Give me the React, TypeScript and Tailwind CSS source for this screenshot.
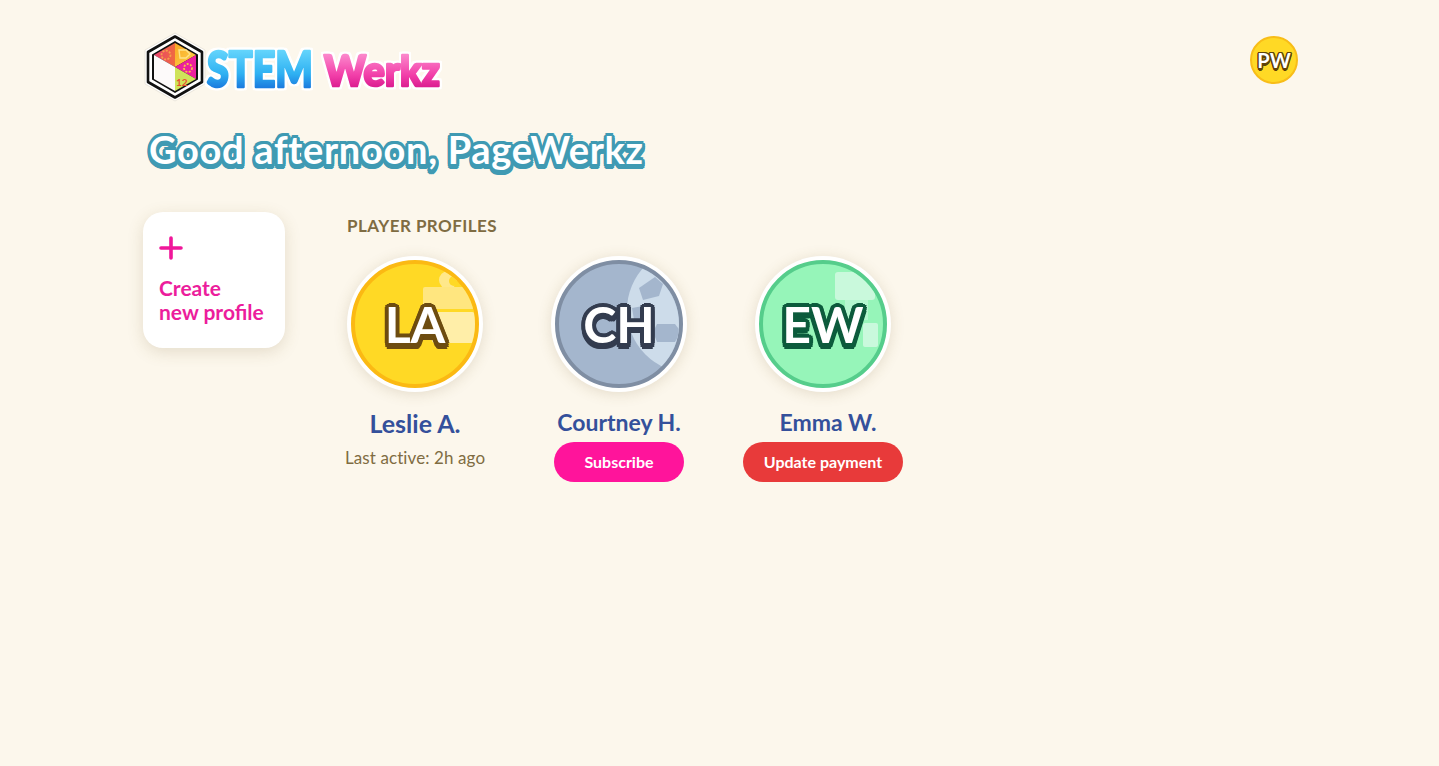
const HexLogo = () => (
  <svg width="64" height="70" viewBox="0 0 64 70" className="shrink-0">
    <defs>
      <linearGradient id="hexRed" x1="0" y1="0" x2="1" y2="0">
        <stop offset="0" stopColor="#e8406f" />
        <stop offset="1" stopColor="#f06a3f" />
      </linearGradient>
      <linearGradient id="hexGold" x1="0" y1="0" x2="1" y2="1">
        <stop offset="0" stopColor="#f9a825" />
        <stop offset="1" stopColor="#fdd34a" />
      </linearGradient>
    </defs>
    <polygon points="32,1 62,18 62,52 32,69 2,52 2,18" fill="#fff" stroke="#ece7dc" strokeWidth="1" strokeLinejoin="round" />
    <polygon points="32,4.5 59,20 59,50 32,65.5 5,50 5,20" fill="#fff" stroke="#111" strokeWidth="2.6" strokeLinejoin="round" />
    <polygon points="32,9 55,22.5 55,47.5 32,61 9,47.5 9,22.5" fill="#111" />
    <polygon points="32,11 53,23 32,35" fill="url(#hexGold)" />
    <polygon points="32,11 11,23 32,35" fill="url(#hexRed)" />
    <polygon points="53,23 53,47 32,35" fill="#ec1f9f" />
    <polygon points="32,35 53,47 32,59" fill="#cfe35a" />
    <polygon points="11,23 32,35 32,59 11,47" fill="#fdfafa" />
    <circle cx="23" cy="23" r="4.5" fill="none" stroke="#f5a04a" strokeWidth="1.8" strokeDasharray="2 1.4" />
    <circle cx="45" cy="36" r="4" fill="none" stroke="#f8bf45" strokeWidth="1.8" strokeDasharray="2 1.4" />
    <path d="M36 18h7l4 4-4 4h-6z" fill="none" stroke="#fee38a" strokeWidth="1.4" />
    <text x="33" y="54" fontSize="10" fontWeight="700" fill="#e8502f" fontFamily="Lato, sans-serif">12</text>
  </svg>
);

const Logo = () => (
  <div className="flex items-center">
    <HexLogo />
    <svg
      width="244"
      height="64"
      viewBox="0 0 244 64"
      className="-ml-[3px] overflow-visible [filter:drop-shadow(2px_0_0_#fff)_drop-shadow(-2px_0_0_#fff)_drop-shadow(0_2px_0_#fff)_drop-shadow(0_-2px_0_#fff)]"
    >
      <defs>
        <linearGradient id="stem" x1="0" y1="0" x2="0" y2="1">
          <stop offset="0.2" stopColor="#63d4fc" />
          <stop offset="0.6" stopColor="#2fb1f2" />
          <stop offset="0.95" stopColor="#1263d6" />
        </linearGradient>
        <linearGradient id="werkz" x1="0" y1="0" x2="0" y2="1">
          <stop offset="0.2" stopColor="#fb86cb" />
          <stop offset="0.6" stopColor="#f23fa9" />
          <stop offset="0.95" stopColor="#d10f86" />
        </linearGradient>
      </defs>
      <g fontFamily="Lato, sans-serif" fontWeight="900" strokeLinejoin="round">
        <text x="3" y="52" fontSize="49" textLength="106" lengthAdjust="spacingAndGlyphs" fill="url(#stem)" stroke="url(#stem)" strokeWidth="2.6">
          STEM
        </text>
        <text x="120" y="51" fontSize="42" textLength="116" lengthAdjust="spacingAndGlyphs" fill="url(#werkz)" stroke="url(#werkz)" strokeWidth="2.6">
          Werkz
        </text>
      </g>
    </svg>
  </div>
);

const Initials = ({ text, className }: { text: string; className: string }) => (
  <span className={`relative font-bold text-white ${className}`}>{text}</span>
);

const Player = ({
  initials,
  name,
  ring,
  fill,
  initialsClass,
  art,
  children,
  nameClass,
}: {
  initials: string;
  name: string;
  ring: string;
  fill: string;
  initialsClass: string;
  art: React.ReactNode;
  children: React.ReactNode;
  nameClass: string;
}) => (
  <div className="flex flex-col items-center">
    <div className="rounded-full bg-white p-[4px] shadow-[0_2px_14px_rgba(120,100,50,0.18)]">
      <div
        className={`relative flex h-[128px] w-[128px] items-center justify-center overflow-hidden rounded-full border-[4px] ${ring} ${fill}`}
      >
        <div className="absolute inset-0">{art}</div>
        <Initials text={initials} className={initialsClass} />
      </div>
    </div>
    <div className={`whitespace-nowrap font-bold leading-[28px] text-[#34509b] ${nameClass}`}>{name}</div>
    {children}
  </div>
);

export default function App() {
  return (
    <div className="min-h-screen w-full bg-[#fcf7ec] pt-[32px] pl-[143px] pr-[141px] font-['Lato',sans-serif]">
      <header className="flex items-start justify-between">
        <Logo />
        <div className="mt-[4px] flex h-[48px] w-[48px] items-center justify-center rounded-full border-2 border-[#f8bd18] bg-[#ffd925]">
          <span className="text-[20px] font-bold text-white [text-shadow:1.5px_0_0_#5e4208,-1.5px_0_0_#5e4208,0_1.5px_0_#5e4208,0_-1.5px_0_#5e4208,1px_1px_0_#5e4208,-1px_1px_0_#5e4208,1px_-1px_0_#5e4208,-1px_-1px_0_#5e4208,0_2.5px_0_#5e4208,1px_2px_0_#5e4208,-1px_2px_0_#5e4208]">
            PW
          </span>
        </div>
      </header>

      <h1 className="mt-[24px] pl-[6px] text-[38px] font-bold leading-[46px] tracking-[0.7px] text-white [text-shadow:3px_0_0_#3f9ab3,2.6px_1.5px_0_#3f9ab3,1.5px_2.6px_0_#3f9ab3,0_3px_0_#3f9ab3,-1.5px_2.6px_0_#3f9ab3,-2.6px_1.5px_0_#3f9ab3,-3px_0_0_#3f9ab3,-2.6px_-1.5px_0_#3f9ab3,-1.5px_-2.6px_0_#3f9ab3,0_-3px_0_#3f9ab3,1.5px_-2.6px_0_#3f9ab3,2.6px_-1.5px_0_#3f9ab3,3px_2px_0_#3f9ab3,-3px_2px_0_#3f9ab3,2.6px_3.5px_0_#3f9ab3,-2.6px_3.5px_0_#3f9ab3,1.5px_4.6px_0_#3f9ab3,-1.5px_4.6px_0_#3f9ab3,0_5px_0_#3f9ab3]">
        Good afternoon, PageWerkz
      </h1>

      <main className="mt-[40px] flex items-start">
        <button className="flex h-[136px] w-[142px] flex-col items-start rounded-[20px] bg-white pl-[16px] pt-[24px] shadow-[0_4px_16px_rgba(120,100,50,0.18)]">
          <svg width="24" height="24" viewBox="0 0 24 24" fill="none" stroke="#f0179a" strokeWidth="3.6" strokeLinecap="round">
            <path d="M12 2v20M2 12h20" />
          </svg>
          <span className="mt-[16px] text-left text-[21px] font-bold leading-[24px] text-[#ec1d9c]">
            Create
            <br />
            new profile
          </span>
        </button>

        <section className="ml-[62px]">
          <h2 className="text-[17px] font-bold uppercase leading-[28px] tracking-[0.45px] text-[#7f6c42]">Player profiles</h2>
          <div className="mt-[16px] flex items-start">
            <div className="w-[136px]">
              <Player
                initials="LA"
                name="Leslie A."
                ring="border-[#fbb913]"
                fill="bg-[#ffd925]"
                initialsClass="text-[50px] [text-shadow:4px_0_0_#6d4c10,3.5px_2px_0_#6d4c10,2px_3.5px_0_#6d4c10,0_4px_0_#6d4c10,-2px_3.5px_0_#6d4c10,-3.5px_2px_0_#6d4c10,-4px_0_0_#6d4c10,-3.5px_-2px_0_#6d4c10,-2px_-3.5px_0_#6d4c10,0_-4px_0_#6d4c10,2px_-3.5px_0_#6d4c10,3.5px_-2px_0_#6d4c10,3.5px_4px_0_#6d4c10,-3.5px_4px_0_#6d4c10,2px_5.5px_0_#6d4c10,-2px_5.5px_0_#6d4c10,0_6px_0_#6d4c10]"
                nameClass="mt-[17px] text-[25px]"
                art={
                  <svg viewBox="0 0 120 120" className="h-full w-full">
                    <circle cx="93" cy="16" r="9" fill="#ffe88a" />
                    <circle cx="99" cy="17" r="5" fill="#ffd925" />
                    <rect x="68" y="23" width="52" height="22" rx="2" fill="#ffe67f" />
                    <rect x="77" y="48" width="43" height="31" rx="3" fill="#ffeea8" />
                    <rect x="70" y="45" width="50" height="3" fill="#ffd925" />
                  </svg>
                }
              >
                <div className="mt-[7px] whitespace-nowrap text-[17px] leading-[28px] tracking-[0.1px] text-[#7f6c42]">Last active: 2h ago</div>
              </Player>
            </div>

            <div className="ml-[68px] w-[136px]">
              <Player
                initials="CH"
                name="Courtney H."
                ring="border-[#7f8ea3]"
                fill="bg-[#a4b6cd]"
                initialsClass="text-[50px] [text-shadow:4px_0_0_#333c4f,3.5px_2px_0_#333c4f,2px_3.5px_0_#333c4f,0_4px_0_#333c4f,-2px_3.5px_0_#333c4f,-3.5px_2px_0_#333c4f,-4px_0_0_#333c4f,-3.5px_-2px_0_#333c4f,-2px_-3.5px_0_#333c4f,0_-4px_0_#333c4f,2px_-3.5px_0_#333c4f,3.5px_-2px_0_#333c4f,3.5px_4px_0_#333c4f,-3.5px_4px_0_#333c4f,2px_5.5px_0_#333c4f,-2px_5.5px_0_#333c4f,0_6px_0_#333c4f]"
                nameClass="mt-[16px] text-[23px]"
                art={
                  <svg viewBox="0 0 120 120" className="h-full w-full">
                    <circle cx="131" cy="46" r="63" fill="#cddcea" />
                    <polygon points="80,24 96,13 104,20 100,32 84,36" fill="#a4b6cd" />
                    <polygon points="73,44 84,42 90,60 76,62" fill="#a4b6cd" />
                    <polygon points="98,60 116,60 122,68 116,78 98,78 94,68" fill="#a4b6cd" />
                  </svg>
                }
              >
                <button className="mt-[6px] h-[40px] w-[130px] shrink-0 rounded-full bg-[#ff149b] text-[16px] font-bold text-white">Subscribe</button>
              </Player>
            </div>

            <div className="ml-[68px] w-[136px]">
              <Player
                initials="EW"
                name="Emma W."
                ring="border-[#55cd8b]"
                fill="bg-[#96f5b9]"
                initialsClass="text-[50px] [text-shadow:4px_0_0_#0c5b3c,3.5px_2px_0_#0c5b3c,2px_3.5px_0_#0c5b3c,0_4px_0_#0c5b3c,-2px_3.5px_0_#0c5b3c,-3.5px_2px_0_#0c5b3c,-4px_0_0_#0c5b3c,-3.5px_-2px_0_#0c5b3c,-2px_-3.5px_0_#0c5b3c,0_-4px_0_#0c5b3c,2px_-3.5px_0_#0c5b3c,3.5px_-2px_0_#0c5b3c,3.5px_4px_0_#0c5b3c,-3.5px_4px_0_#0c5b3c,2px_5.5px_0_#0c5b3c,-2px_5.5px_0_#0c5b3c,0_6px_0_#0c5b3c]"
                nameClass="mt-[16px] translate-x-[5px] text-[23px]"
                art={
                  <svg viewBox="0 0 120 120" className="h-full w-full">
                    <rect x="72" y="8" width="40" height="28" rx="3" fill="#c9f9dc" />
                    <rect x="82" y="36" width="23" height="20" fill="#b4f7cf" />
                    <rect x="100" y="59" width="15" height="24" rx="2" fill="#c9f9dc" />
                  </svg>
                }
              >
                <button className="mt-[6px] h-[40px] w-[160px] shrink-0 rounded-full bg-[#e83a3a] text-[16px] font-bold text-white">Update payment</button>
              </Player>
            </div>
          </div>
        </section>
      </main>
    </div>
  );
}
